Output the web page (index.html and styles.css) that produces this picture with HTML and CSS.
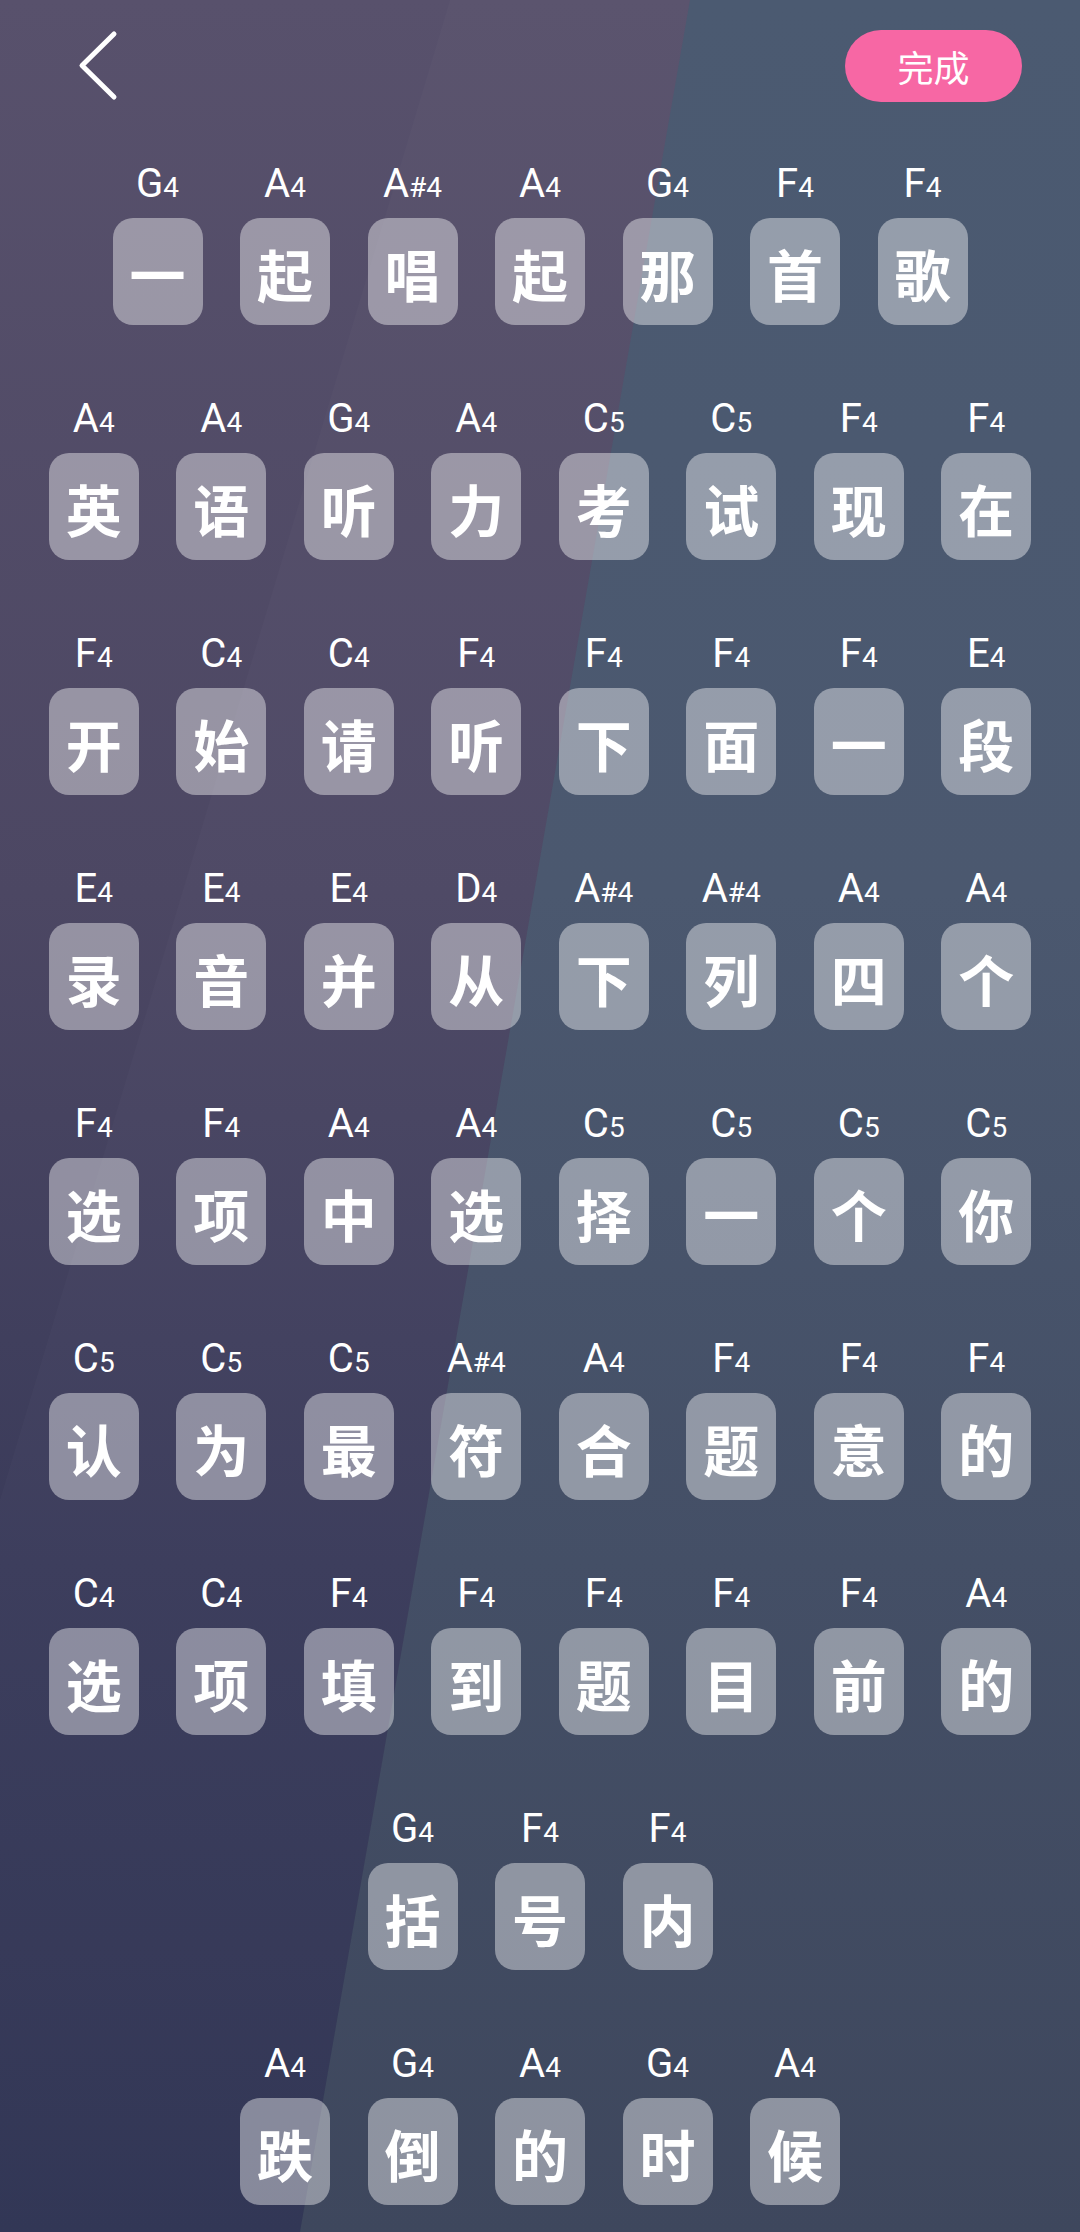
FILE: index.html
```html
<!DOCTYPE html>
<html lang="zh-CN">

<head>
  <meta charset="UTF-8" />
  <meta name="viewport" content="width=device-width, initial-scale=1.0" />
  <title>编辑歌词音高</title>
  <link rel="stylesheet" href="styles.css">
</head>

<body>
  <div class="backdrop"></div>
  <div class="backdrop backdrop-soft"></div>

  <div class="page">
    <header class="topbar">
      <button class="back" aria-label="返回">
        <svg width="42" height="72" viewBox="0 0 42 72">
          <path d="M36 4 L4 35.5 L36 67" fill="none" stroke="#fff" stroke-width="5" stroke-linecap="round" stroke-linejoin="round" />
        </svg>
      </button>
      <button class="done">完成</button>
    </header>

    <main class="lyrics">
      <div class="row">
        <div class="cell"><div class="note">G<span>4</span></div><div class="word">一</div></div>
        <div class="cell"><div class="note">A<span>4</span></div><div class="word">起</div></div>
        <div class="cell"><div class="note">A<span>#4</span></div><div class="word">唱</div></div>
        <div class="cell"><div class="note">A<span>4</span></div><div class="word">起</div></div>
        <div class="cell"><div class="note">G<span>4</span></div><div class="word">那</div></div>
        <div class="cell"><div class="note">F<span>4</span></div><div class="word">首</div></div>
        <div class="cell"><div class="note">F<span>4</span></div><div class="word">歌</div></div>
      </div>

      <div class="row">
        <div class="cell"><div class="note">A<span>4</span></div><div class="word">英</div></div>
        <div class="cell"><div class="note">A<span>4</span></div><div class="word">语</div></div>
        <div class="cell"><div class="note">G<span>4</span></div><div class="word">听</div></div>
        <div class="cell"><div class="note">A<span>4</span></div><div class="word">力</div></div>
        <div class="cell"><div class="note">C<span>5</span></div><div class="word">考</div></div>
        <div class="cell"><div class="note">C<span>5</span></div><div class="word">试</div></div>
        <div class="cell"><div class="note">F<span>4</span></div><div class="word">现</div></div>
        <div class="cell"><div class="note">F<span>4</span></div><div class="word">在</div></div>
      </div>

      <div class="row">
        <div class="cell"><div class="note">F<span>4</span></div><div class="word">开</div></div>
        <div class="cell"><div class="note">C<span>4</span></div><div class="word">始</div></div>
        <div class="cell"><div class="note">C<span>4</span></div><div class="word">请</div></div>
        <div class="cell"><div class="note">F<span>4</span></div><div class="word">听</div></div>
        <div class="cell"><div class="note">F<span>4</span></div><div class="word">下</div></div>
        <div class="cell"><div class="note">F<span>4</span></div><div class="word">面</div></div>
        <div class="cell"><div class="note">F<span>4</span></div><div class="word">一</div></div>
        <div class="cell"><div class="note">E<span>4</span></div><div class="word">段</div></div>
      </div>

      <div class="row">
        <div class="cell"><div class="note">E<span>4</span></div><div class="word">录</div></div>
        <div class="cell"><div class="note">E<span>4</span></div><div class="word">音</div></div>
        <div class="cell"><div class="note">E<span>4</span></div><div class="word">并</div></div>
        <div class="cell"><div class="note">D<span>4</span></div><div class="word">从</div></div>
        <div class="cell"><div class="note">A<span>#4</span></div><div class="word">下</div></div>
        <div class="cell"><div class="note">A<span>#4</span></div><div class="word">列</div></div>
        <div class="cell"><div class="note">A<span>4</span></div><div class="word">四</div></div>
        <div class="cell"><div class="note">A<span>4</span></div><div class="word">个</div></div>
      </div>

      <div class="row">
        <div class="cell"><div class="note">F<span>4</span></div><div class="word">选</div></div>
        <div class="cell"><div class="note">F<span>4</span></div><div class="word">项</div></div>
        <div class="cell"><div class="note">A<span>4</span></div><div class="word">中</div></div>
        <div class="cell"><div class="note">A<span>4</span></div><div class="word">选</div></div>
        <div class="cell"><div class="note">C<span>5</span></div><div class="word">择</div></div>
        <div class="cell"><div class="note">C<span>5</span></div><div class="word">一</div></div>
        <div class="cell"><div class="note">C<span>5</span></div><div class="word">个</div></div>
        <div class="cell"><div class="note">C<span>5</span></div><div class="word">你</div></div>
      </div>

      <div class="row">
        <div class="cell"><div class="note">C<span>5</span></div><div class="word">认</div></div>
        <div class="cell"><div class="note">C<span>5</span></div><div class="word">为</div></div>
        <div class="cell"><div class="note">C<span>5</span></div><div class="word">最</div></div>
        <div class="cell"><div class="note">A<span>#4</span></div><div class="word">符</div></div>
        <div class="cell"><div class="note">A<span>4</span></div><div class="word">合</div></div>
        <div class="cell"><div class="note">F<span>4</span></div><div class="word">题</div></div>
        <div class="cell"><div class="note">F<span>4</span></div><div class="word">意</div></div>
        <div class="cell"><div class="note">F<span>4</span></div><div class="word">的</div></div>
      </div>

      <div class="row">
        <div class="cell"><div class="note">C<span>4</span></div><div class="word">选</div></div>
        <div class="cell"><div class="note">C<span>4</span></div><div class="word">项</div></div>
        <div class="cell"><div class="note">F<span>4</span></div><div class="word">填</div></div>
        <div class="cell"><div class="note">F<span>4</span></div><div class="word">到</div></div>
        <div class="cell"><div class="note">F<span>4</span></div><div class="word">题</div></div>
        <div class="cell"><div class="note">F<span>4</span></div><div class="word">目</div></div>
        <div class="cell"><div class="note">F<span>4</span></div><div class="word">前</div></div>
        <div class="cell"><div class="note">A<span>4</span></div><div class="word">的</div></div>
      </div>

      <div class="row">
        <div class="cell"><div class="note">G<span>4</span></div><div class="word">括</div></div>
        <div class="cell"><div class="note">F<span>4</span></div><div class="word">号</div></div>
        <div class="cell"><div class="note">F<span>4</span></div><div class="word">内</div></div>
      </div>

      <div class="row">
        <div class="cell"><div class="note">A<span>4</span></div><div class="word">跌</div></div>
        <div class="cell"><div class="note">G<span>4</span></div><div class="word">倒</div></div>
        <div class="cell"><div class="note">A<span>4</span></div><div class="word">的</div></div>
        <div class="cell"><div class="note">G<span>4</span></div><div class="word">时</div></div>
        <div class="cell"><div class="note">A<span>4</span></div><div class="word">候</div></div>
      </div>
    </main>
  </div>
</body>

</html>
```

FILE: styles.css
```css
html,
body {
  margin: 0;
  padding: 0;
}

body {
  font-family: Roboto, "Noto Sans CJK SC", sans-serif;
  color: #fff;
  min-height: 100vh;
  display: grid;
  grid-template: 1fr / 1fr;
  background: linear-gradient(180deg, #58516c 0%, #4c4763 40%, #3a3b5a 70%, #2e3453 100%);
  overflow: hidden;
}

/* the tilted blue sheet on the right half */
.backdrop {
  grid-area: 1 / 1;
  background: linear-gradient(180deg, #4b5a71 0%, #4b586f 40%, #444f66 70%, #3e475d 100%);
  clip-path: polygon(690px 0, 100% 0, 100% 100%, 300px 100%);
}

.backdrop-soft {
  background: rgba(255, 255, 255, 0.02);
  clip-path: polygon(450px 0, 690px 0, 300px 100%, 0 100%, 0 1500px);
}

.page {
  grid-area: 1 / 1;
  position: relative;
  z-index: 1;
  display: flex;
  flex-direction: column;
}

.topbar {
  display: flex;
  justify-content: space-between;
  align-items: center;
  padding: 30px 58px 0 78px;
  height: 72px;
}

.back {
  background: none;
  border: none;
  padding: 0;
  width: 42px;
  height: 72px;
  display: flex;
}

.done {
  width: 177px;
  height: 72px;
  border: none;
  border-radius: 36px;
  background-color: #f767a4;
  color: #fff;
  font-family: "Noto Sans CJK SC", sans-serif;
  font-size: 36px;
  padding: 0;
}

.lyrics {
  display: flex;
  flex-direction: column;
  gap: 74px;
  margin-top: 62px;
}

.row {
  display: flex;
  justify-content: center;
  gap: 37.5px;
}

.cell {
  width: 90px;
  display: flex;
  flex-direction: column;
  align-items: center;
}

.note {
  font-family: Roboto, sans-serif;
  font-size: 40px;
  line-height: 40px;
  height: 40px;
  margin-bottom: 14px;
  white-space: nowrap;
}

.note span {
  font-size: 28px;
}

.word {
  width: 90px;
  height: 107px;
  border-radius: 20px;
  background-color: rgba(255, 255, 255, 0.41);
  font-family: "Noto Sans CJK SC", sans-serif;
  font-weight: 700;
  font-size: 56px;
  line-height: 110px;
  text-align: center;
}
```
